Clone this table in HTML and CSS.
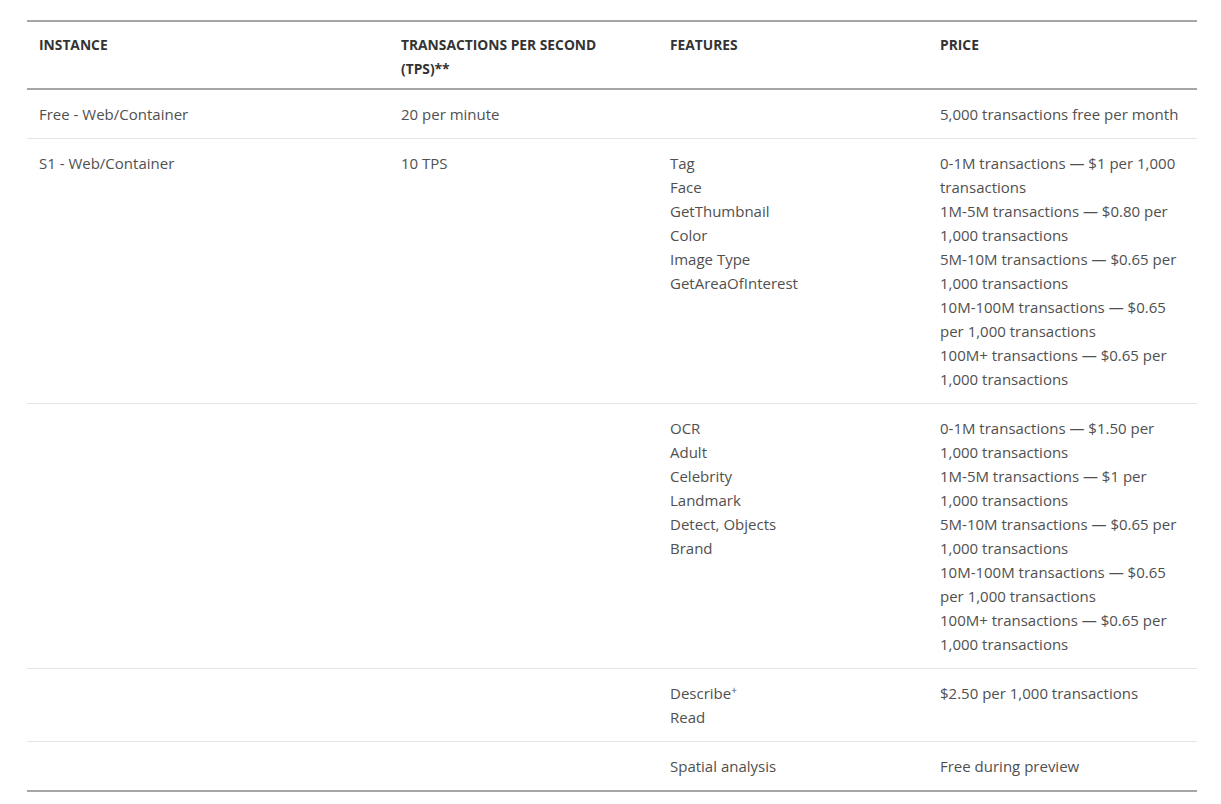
FILE: index.html
```html
<!DOCTYPE html>
<html lang="en">
<head>
<meta charset="utf-8">
<title>Pricing</title>
<link rel="stylesheet" href="styles.css">
</head>
<body>
<div class="page">
  <table class="pricing">
    <colgroup>
      <col class="c-instance">
      <col class="c-tps">
      <col class="c-features">
      <col class="c-price">
    </colgroup>
    <thead>
      <tr>
        <th>Instance</th>
        <th>Transactions Per Second (TPS)**</th>
        <th>Features</th>
        <th>Price</th>
      </tr>
    </thead>
    <tbody>
      <tr>
        <td>Free - Web/Container</td>
        <td>20 per minute</td>
        <td></td>
        <td>5,000 transactions free per month</td>
      </tr>
      <tr>
        <td>S1 - Web/Container</td>
        <td>10 TPS</td>
        <td>Tag<br>Face<br>GetThumbnail<br>Color<br>Image Type<br>GetAreaOfInterest</td>
        <td>0-1M transactions — $1 per 1,000 transactions<br>1M-5M transactions — $0.80 per 1,000 transactions<br>5M-10M transactions — $0.65 per 1,000 transactions<br>10M-100M transactions — $0.65 per 1,000 transactions<br>100M+ transactions — $0.65 per 1,000 transactions</td>
      </tr>
      <tr>
        <td></td>
        <td></td>
        <td>OCR<br>Adult<br>Celebrity<br>Landmark<br>Detect, Objects<br>Brand</td>
        <td>0-1M transactions — $1.50 per 1,000 transactions<br>1M-5M transactions — $1 per 1,000 transactions<br>5M-10M transactions — $0.65 per 1,000 transactions<br>10M-100M transactions — $0.65 per 1,000 transactions<br>100M+ transactions — $0.65 per 1,000 transactions</td>
      </tr>
      <tr>
        <td></td>
        <td></td>
        <td>Describe<sup class="plus">+</sup><br>Read</td>
        <td>$2.50 per 1,000 transactions</td>
      </tr>
      <tr>
        <td></td>
        <td></td>
        <td>Spatial analysis</td>
        <td>Free during preview</td>
      </tr>
    </tbody>
  </table>
</div>
</body>
</html>
```
FILE: styles.css
```css
html, body {
  margin: 0;
  padding: 0;
  background: #ffffff;
}

.page {
  padding: 20px 24px 0 27px;
  font-family: "Open Sans", "Noto Sans", Arial, sans-serif;
  color: #505050;
}

.pricing {
  width: 1170px;
  border-collapse: collapse;
  table-layout: fixed;
  border-top: 2px solid #a6a6a6;
  border-bottom: 2px solid #a6a6a6;
}

.c-instance { width: 362px; }
.c-tps { width: 269px; }
.c-features { width: 270px; }
.c-price { width: 269px; }

.pricing th {
  text-align: left;
  vertical-align: top;
  font-size: 13.8px;
  font-weight: 700;
  line-height: 24px;
  text-transform: uppercase;
  color: #333333;
  padding: 11px 24px 7px 12px;
  border-bottom: 2px solid #a6a6a6;
}

.pricing td {
  vertical-align: top;
  font-size: 15px;
  line-height: 24px;
  padding: 12px;
  border-bottom: 1px solid #e6e6e6;
}

.pricing tbody tr:last-child td {
  border-bottom: none;
}

.plus {
  font-size: 10px;
  line-height: 0;
  vertical-align: 5px;
}
```
